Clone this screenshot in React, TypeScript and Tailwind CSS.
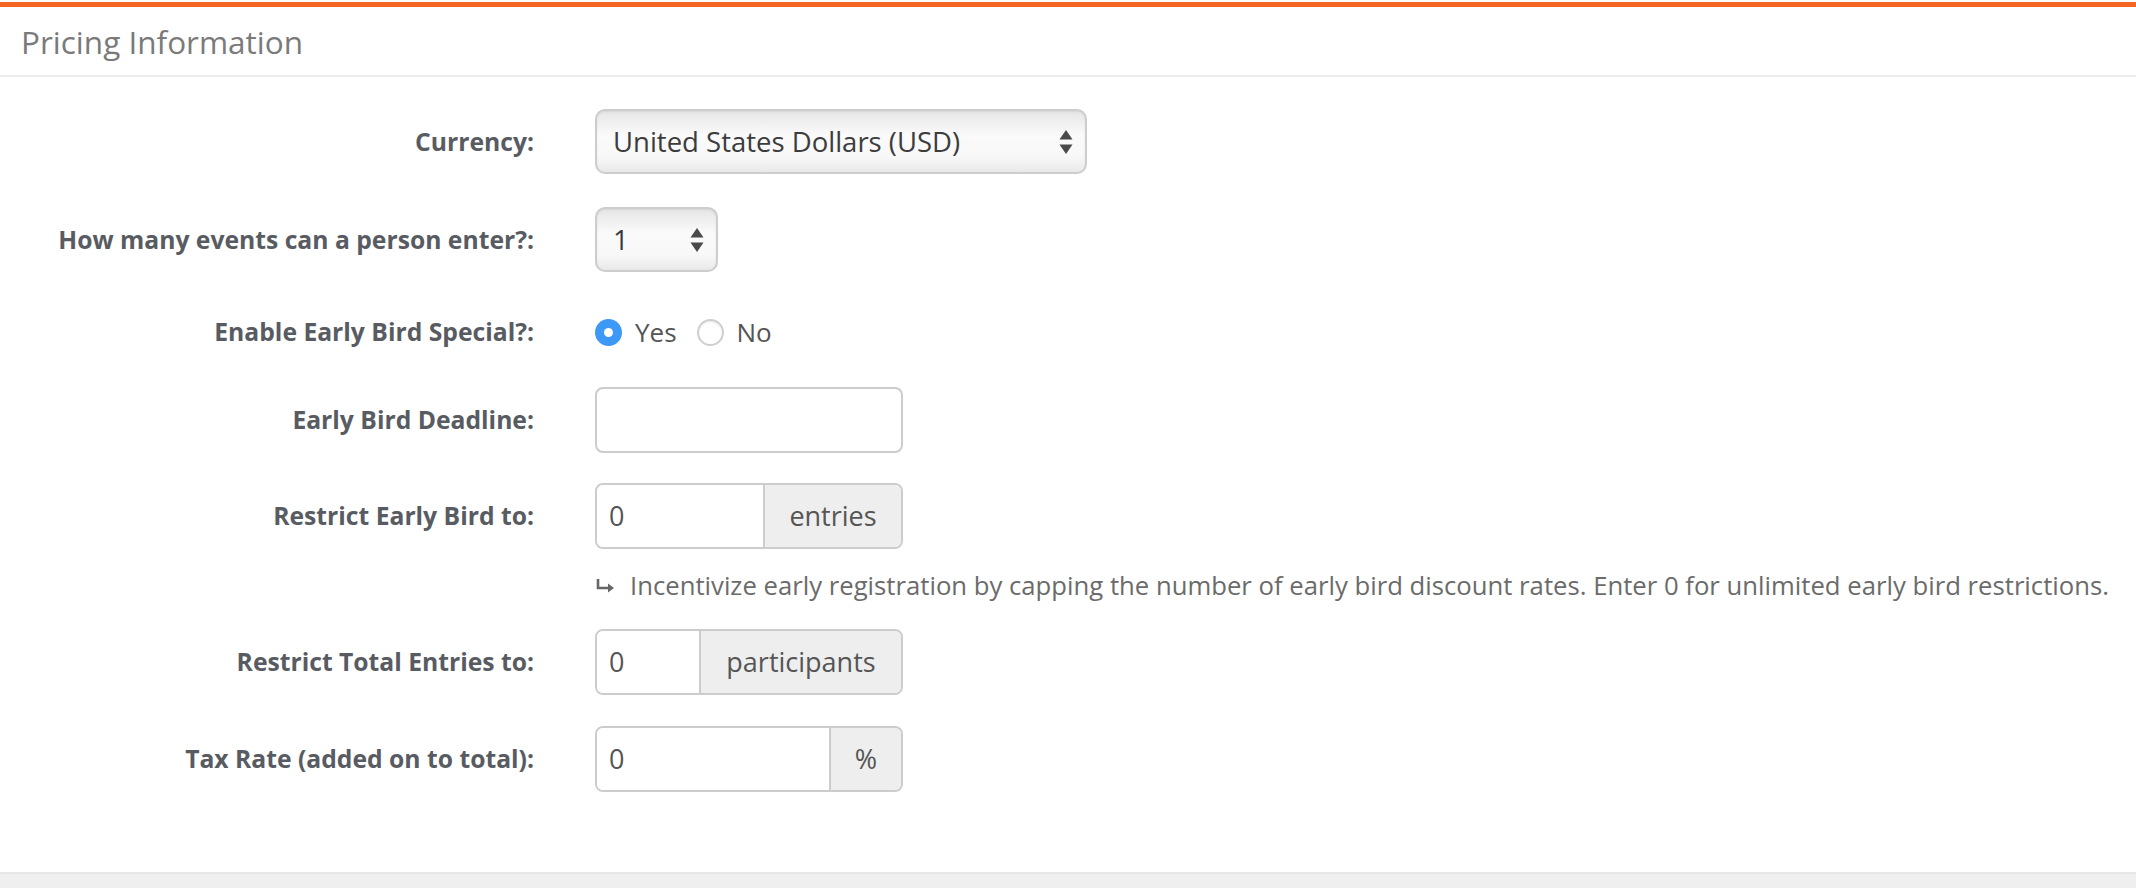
import type { ReactNode } from "react";

const font = { fontFamily: '"Open Sans", "Liberation Sans", sans-serif' };

function Row({ label, children, className }: { label: string; children: ReactNode; className?: string }) {
  return (
    <div className={`flex items-center ${className ?? ""}`}>
      <div className="w-[534px] shrink-0 text-right text-[24.7px] font-bold text-[#585c62]">{label}</div>
      <div className="ml-[61px] flex items-center">{children}</div>
    </div>
  );
}

function Arrows() {
  return (
    <svg width="14" height="26" viewBox="0 0 14 26" className="shrink-0">
      <path d="M7 1 L13.5 10.5 L0.5 10.5 Z" fill="#4a4a4a" />
      <path d="M7 25 L13.5 15.5 L0.5 15.5 Z" fill="#4a4a4a" />
    </svg>
  );
}

function Select({ value, width }: { value: string; width: string }) {
  return (
    <div
      className={`${width} flex h-[65px] items-center justify-between rounded-[10px] border-2 border-[#cdcdcd] bg-[linear-gradient(to_bottom,#e6e6e6,#fafafa_40%,#f8f8f8_75%,#e9e9e9)] pl-[16px] pr-[12px] text-[27.5px] text-[#3c3c3c] shadow-[inset_0_1px_2px_rgba(0,0,0,0.08)]`}
    >
      <span>{value}</span>
      <Arrows />
    </div>
  );
}

function Radio({ checked, label }: { checked?: boolean; label: string }) {
  return (
    <label className="flex items-center">
      {checked ? (
        <span className="flex h-[27px] w-[27px] items-center justify-center rounded-full bg-[#3d99f5]">
          <span className="h-[9px] w-[9px] rounded-full bg-white" />
        </span>
      ) : (
        <span className="h-[27px] w-[27px] rounded-full border-2 border-[#cfcfcf] bg-white shadow-[inset_0_1px_2px_rgba(0,0,0,0.1)]" />
      )}
      <span className="ml-[13px] text-[26px] text-[#555]">{label}</span>
    </label>
  );
}

function InputGroup({ value, addon, inputW, addonW }: { value: string; addon: string; inputW: string; addonW: string }) {
  return (
    <div className="flex h-[66px] overflow-hidden rounded-[8px] border-2 border-[#cccccc]">
      <div className={`${inputW} flex items-center bg-white pl-[12px] text-[27px] text-[#555]`}>{value}</div>
      <div className={`${addonW} flex items-center justify-center border-l-2 border-[#cccccc] bg-[#eeeeee] text-[27px] text-[#555]`}>
        {addon}
      </div>
    </div>
  );
}

export default function App() {
  return (
    <div style={font} className="flex h-[888px] w-[2136px] flex-col bg-white">
      <div className="mt-[2px] h-[5px] bg-[#f46523]" />
      <div className="flex h-[70px] items-center border-b-2 border-[#ececec] pl-[21px]">
        <h2 className="mt-[2px] text-[31.5px] text-[#7a7a7a]">Pricing Information</h2>
      </div>

      <div className="flex-1 pt-[32px]">
        <Row label="Currency:" className="mb-[33px]">
          <Select value="United States Dollars (USD)" width="w-[492px]" />
        </Row>
        <Row label="How many events can a person enter?:" className="mb-[31px]">
          <Select value="1" width="w-[123px]" />
        </Row>
        <Row label="Enable Early Bird Special?:" className="mb-[26px] h-[58px]">
          <div className="flex items-center gap-[20px]">
            <Radio checked label="Yes" />
            <Radio label="No" />
          </div>
        </Row>
        <Row label="Early Bird Deadline:" className="mb-[30px]">
          <div className="h-[66px] w-[308px] rounded-[8px] border-2 border-[#cccccc] bg-white" />
        </Row>
        <Row label="Restrict Early Bird to:">
          <InputGroup value="0" addon="entries" inputW="w-[166px]" addonW="w-[138px]" />
        </Row>
        <div className="ml-[595px] mt-[17px] mb-[23px] flex h-[40px] items-center text-[25.7px] text-[#6b6b6b]">
          <svg width="20" height="16" viewBox="0 0 20 16" className="mr-[15px] shrink-0">
            <path d="M3 1 V10 H14" fill="none" stroke="#666" strokeWidth="2.6" />
            <path d="M13 5.5 L19 10 L13 14.5 Z" fill="#666" />
          </svg>
          <span>
            Incentivize early registration by capping the number of early bird discount rates. Enter 0 for unlimited
            early bird restrictions.
          </span>
        </div>
        <Row label="Restrict Total Entries to:" className="mb-[31px]">
          <InputGroup value="0" addon="participants" inputW="w-[102px]" addonW="w-[202px]" />
        </Row>
        <Row label="Tax Rate (added on to total):">
          <InputGroup value="0" addon="%" inputW="w-[232px]" addonW="w-[72px]" />
        </Row>
      </div>

      <div className="h-[16px] border-t-2 border-[#e6e6e6] bg-[#efefef]" />
    </div>
  );
}
